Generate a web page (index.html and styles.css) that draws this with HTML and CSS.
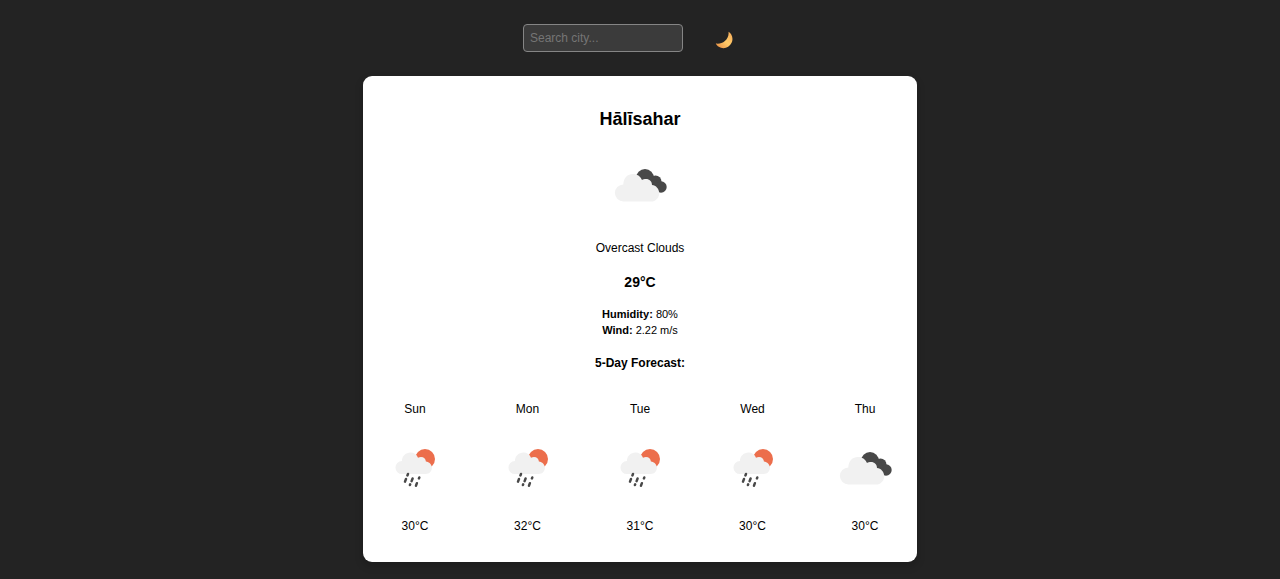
FILE: index.html
```html
<!DOCTYPE html>
<html lang="en">
<head>
<meta charset="utf-8">
<meta name="viewport" content="width=device-width, initial-scale=1">
<title>Weather</title>
<link rel="stylesheet" href="styles.css">
</head>
<body>
<svg class="sprite" aria-hidden="true">
  <symbol id="overcast" viewBox="0 0 90 90">
    <g fill="#484848"><circle cx="50" cy="38" r="9"/><circle cx="60.5" cy="41.5" r="6"/><circle cx="66" cy="47" r="5.7"/><path d="M50 38L60 37L66 52L58 51Z"/></g>
    <path fill="#f1f1f1" d="M28.5 61.5a8.5 8.5 0 0 1-.2-17C28.500 38 32.500 34 38 34c4 0 7.500 2.300 9 6 1-.8 2.500-1 4-1 3.500 0 6 2.500 6 6 4 .3 7.200 4 7.200 8.200 0 4.600-3.700 8.300-8.200 8.300Z"/>
  </symbol>
  <symbol id="rain" viewBox="0 0 90 90">
    <circle cx="55" cy="36" r="10" fill="#ec6e4c"/>
    <path fill="#f1f1f1" d="M32 51a6.500 6.500 0 0 1-.1-13C32 33 36 29.500 40.500 29.500c3.500 0 6.300 2 7.500 5.200 1-.5 2-.7 3-.7 2.800 0 4.800 2 4.900 4.500 3.300.3 6 3 6 6.300 0 3.500-2.700 6.200-6.100 6.200Z"/>
    <path stroke="#484848" stroke-width="2.500" stroke-linecap="round" d="M38 51l-.6 1.400M36 56l-1 2.600M42.600 55.500l-1 2.600M40.200 61.300l-.3.700M49.300 54.500l-.4.900M46.900 60.200l-.9 2.500"/>
  </symbol>
</svg>
<header class="toolbar">
  <input class="search" type="text" placeholder="Search city..." aria-label="Search city">
  <button class="theme" type="button" aria-label="Toggle theme">
    <svg class="moon" viewBox="0 0 18 18" aria-hidden="true">
      <defs><linearGradient id="glow" x1="0" y1="1" x2="1" y2="0"><stop offset="0" stop-color="#e88a42"/><stop offset=".5" stop-color="#ffcb68"/><stop offset="1" stop-color="#f5a95a"/></linearGradient></defs>
      <path fill="url(#glow)" d="M13.500.8C17 3 18.600 7.500 16.600 11.700 14.500 16 10.300 18 6 16.800 3.600 16.100 1.800 14.500.8 12.500 4 13 7.400 12.200 9.900 10 12.500 7.700 14 4.300 13.500.8Z"/>
    </svg>
  </button>
</header>
<main class="card">
  <h1 class="city">Hālīsahar</h1>
  <svg class="icon" role="img" aria-label="Overcast clouds"><use href="#overcast"/></svg>
  <p class="condition">Overcast Clouds</p>
  <p class="temperature">29°C</p>
  <div class="details">
    <p><strong>Humidity:</strong> 80%</p>
    <p><strong>Wind:</strong> 2.22 m/s</p>
  </div>
  <h2 class="subtitle">5-Day Forecast:</h2>
  <div class="forecast">
    <div class="day"><p>Sun</p><svg class="icon" role="img" aria-label="Rain"><use href="#rain"/></svg><p>30°C</p></div>
    <div class="day"><p>Mon</p><svg class="icon" role="img" aria-label="Rain"><use href="#rain"/></svg><p>32°C</p></div>
    <div class="day"><p>Tue</p><svg class="icon" role="img" aria-label="Rain"><use href="#rain"/></svg><p>31°C</p></div>
    <div class="day"><p>Wed</p><svg class="icon" role="img" aria-label="Rain"><use href="#rain"/></svg><p>30°C</p></div>
    <div class="day"><p>Thu</p><svg class="icon" role="img" aria-label="Overcast clouds"><use href="#overcast"/></svg><p>30°C</p></div>
  </div>
</main>
</body>
</html>
```
FILE: styles.css
```css
* { box-sizing: border-box; }
body {
  margin: 0;
  padding: 24px 16px 16px;
  background: #232323;
  color: #000;
  font: 12px/16px "Liberation Sans", Arial, sans-serif;
}
p, h1, h2 { margin: 0; }
.sprite { position: absolute; width: 0; height: 0; }
.toolbar {
  display: flex;
  justify-content: center;
  align-items: center;
  gap: 24px;
  margin-bottom: 24px;
  padding-right: 16px;
}
.search {
  width: 160px;
  height: 28px;
  padding: 0 6px 1px;
  border: 1px solid #858585;
  border-radius: 4px;
  background: #3b3b3b;
  color: #fff;
  font: 12px "Liberation Sans", Arial, sans-serif;
}
.search::placeholder { color: #757575; }
.theme {
  display: flex;
  padding: 4px 8px 0;
  border: 0;
  background: none;
  cursor: pointer;
}
.moon { width: 18px; height: 18px; }
.card {
  display: flex;
  flex-direction: column;
  align-items: center;
  max-width: 554px;
  margin: 0 auto;
  padding: 32px 7px 18px;
  border-radius: 9px;
  background: #fff;
  box-shadow: 0 4px 9px rgba(0, 0, 0, .2);
  text-align: center;
}
.city { margin-bottom: 10px; font-size: 18px; line-height: 22px; }
.icon { display: block; width: 90px; height: 90px; }
.condition { margin: 10px 0 18px; }
.temperature { margin-bottom: 16px; font-size: 14px; font-weight: bold; }
.details { font-size: 11px; }
.subtitle { margin: 17px 0 20px; font-size: 12px; line-height: 16px; }
.forecast {
  display: flex;
  justify-content: space-between;
  align-self: stretch;
}
.day {
  display: flex;
  flex-direction: column;
  align-items: center;
  padding: 10px 0;
}
.day .icon { margin: 6px 0 5px; }
```
